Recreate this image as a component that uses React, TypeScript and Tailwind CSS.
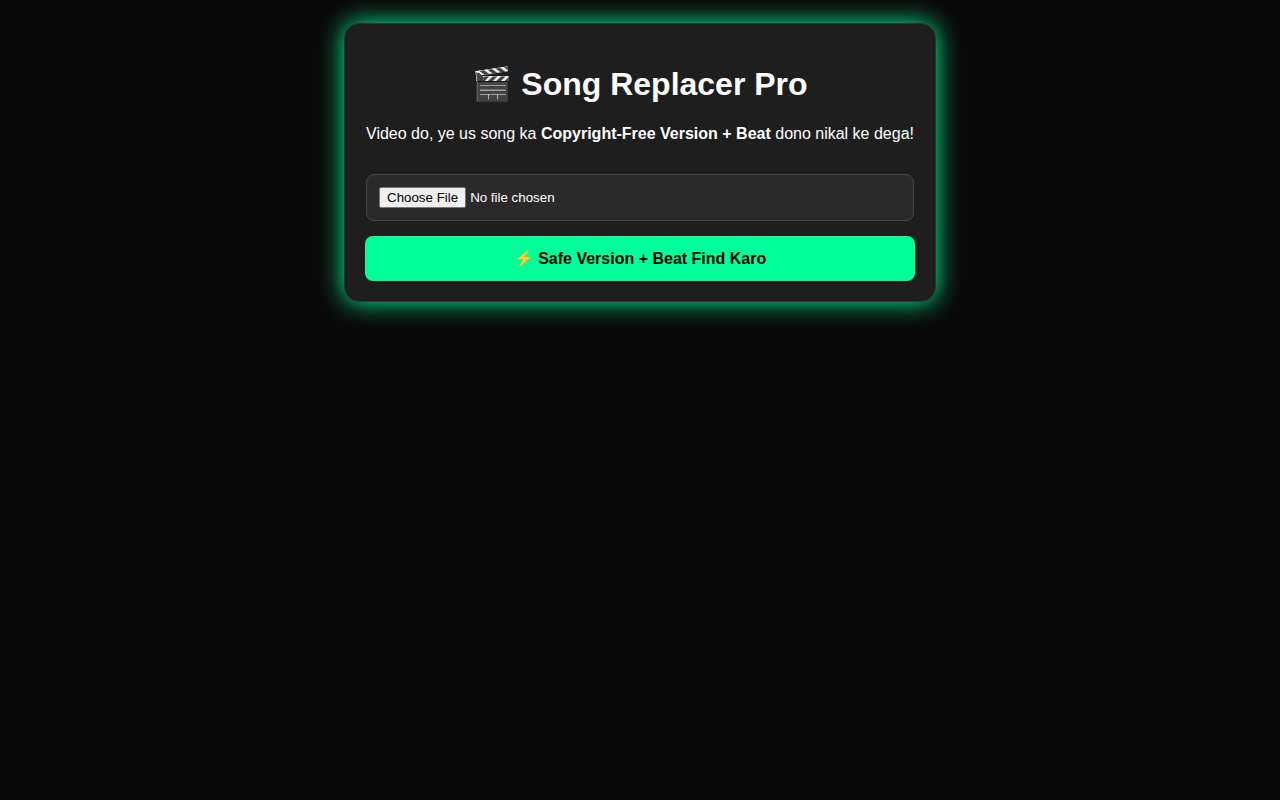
import { useState } from 'react';

export default function App() {
  const [file, setFile] = useState<File | null>(null);

  const handleSubmit = (e: React.FormEvent) => {
    e.preventDefault();
    if (!file) return;
    console.log('Processing', file.name);
  };

  return (
    <div
      className="min-h-screen bg-[#0a0a0a] px-4 pt-[23px] pb-6 text-center text-base text-white"
      style={{ fontFamily: "'Liberation Sans', Arial, sans-serif" }}
    >
      <form
        onSubmit={handleSubmit}
        className="mx-auto w-full max-w-[592px] rounded-[15px] border border-[#333] bg-[#1e1e1e] p-5 shadow-[0_0_25px_#00ff99]"
      >
        <h1 className="mt-5 mb-[21px] text-[32px] leading-10 font-bold">🎬 Song Replacer Pro</h1>
        <p className="mb-[31px] leading-[18px]">
          Video do, ye us song ka <b>Copyright-Free Version + Beat</b> dono nikal ke dega!
        </p>
        <div className="px-px">
          <input
            type="file"
            accept="video/*"
            aria-label="Video file"
            onChange={(e) => setFile(e.target.files?.[0] ?? null)}
            className="block w-full rounded-lg border border-[#444] bg-[#2a2a2a] p-3 [font-size:smaller] leading-[15px] file:mr-1 file:rounded-xs file:border file:border-[#767676] file:bg-[#efefef] file:px-[7px] file:py-0.5 file:text-black"
          />
        </div>
        <button
          type="submit"
          className="mt-[15px] block w-full cursor-pointer rounded-lg bg-[#00ff99] p-3 leading-[21px] font-bold text-black"
        >
          ⚡ Safe Version + Beat Find Karo
        </button>
      </form>
    </div>
  );
}
